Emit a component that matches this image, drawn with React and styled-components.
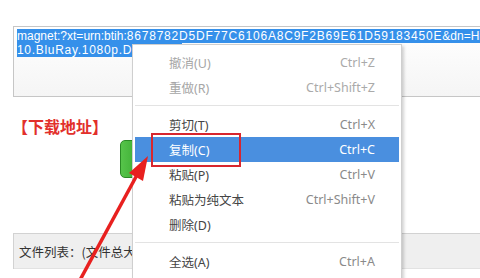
import React from "react";
import styled, { createGlobalStyle } from "styled-components";

const Global = createGlobalStyle`
  html, body { margin: 0; padding: 0; background: #fff; }
  body { width: 480px; height: 278px; overflow: hidden; }
`;

const Page = styled.div`
  position: relative;
  width: 480px;
  height: 278px;
  overflow: hidden;
  padding: 26px 0 0 13px;
  box-sizing: border-box;
  display: flex;
  flex-direction: column;
  align-items: flex-start;
  font-family: "Liberation Sans", Arial, sans-serif;
`;

const TextBox = styled.div`
  width: 500px;
  height: 71px;
  flex: none;
  box-sizing: border-box;
  border: 1.5px solid #c6c6c6;
  border-right: none;
  padding: 2px 3px;
  background: linear-gradient(180deg, #ffffff 0%, #f5f5f5 100%);
  font-size: 12px;
  line-height: 14px;
  white-space: nowrap;
  overflow: hidden;
`;

const Selected = styled.span`
  background: #3590ea;
  color: #fff;
  letter-spacing: ${(p) => p.$spacing || "0px"};
`;

const Hash = styled.span`
  letter-spacing: 0.8px;
`;

const Heading = styled.div`
  margin: 19px 0 0 -1px;
  font-family: "Noto Sans CJK SC", sans-serif;
  font-weight: 700;
  font-size: 16px;
  line-height: 20px;
  color: #e2302b;
`;

const ButtonRow = styled.div`
  display: flex;
  margin: 4px 0 0 107px;
`;

const GreenButton = styled.div`
  width: 60px;
  height: 38px;
  border-radius: 5px;
  box-sizing: border-box;
  border: 1px solid #2a8a25;
  background: linear-gradient(90deg, #56c44a 0%, #33a52c 40%, #2a9424 100%);
`;

const FilePanel = styled.div`
  margin-top: 55px;
  width: 500px;
  flex: none;
  box-sizing: border-box;
  border-top: 1px solid #d2d2d2;
  border-left: 1px solid #d2d2d2;
`;

const FileHeader = styled.div`
  height: 34px;
  display: flex;
  align-items: center;
  padding-left: 5px;
  background: #efefef;
  font-family: "Noto Sans CJK SC", sans-serif;
  font-size: 12.5px;
  color: #333;
  white-space: nowrap;
  border-bottom: 1px solid #e2e2e2;
`;

const Menu = styled.div`
  position: absolute;
  z-index: 5;
  left: 132px;
  top: 44px;
  width: 270px;
  height: 260px;
  box-sizing: border-box;
  padding: 4.5px 2px;
  background: #fff;
  border: 1px solid #cfcfcf;
  box-shadow: 2px 2px 3px rgba(0, 0, 0, 0.18);
  display: flex;
  flex-direction: column;
`;

const Item = styled.div`
  position: relative;
  height: 25px;
  flex: none;
  display: flex;
  align-items: center;
  justify-content: space-between;
  padding: 0 24px 0 34px;
  background: ${(p) => (p.$active ? "#4a8fdf" : "transparent")};
  color: ${(p) => (p.$active ? "#fff" : p.$disabled ? "#a6a6a6" : "#454545")};
`;

const Label = styled.span`
  font-family: "Noto Sans", "Noto Sans CJK SC", sans-serif;
  font-size: 12.5px;
`;

const Shortcut = styled.span`
  font-family: "Noto Sans", sans-serif;
  font-size: 12.5px;
  color: ${(p) => (p.$active ? "#fff" : p.$disabled ? "#aaa" : "#8a8a8a")};
`;

const Separator = styled.div`
  height: 12px;
  flex: none;
  display: flex;
  align-items: center;
  &::after {
    content: "";
    flex: 1;
    height: 1px;
    background: #e3e3e3;
  }
`;

const RedFrame = styled.div`
  position: absolute;
  left: 16px;
  top: -3.5px;
  width: 90px;
  height: 34px;
  box-sizing: border-box;
  border: 2.5px solid #d8262e;
`;

const ArrowSvg = styled.svg`
  position: absolute;
  z-index: 6;
  left: 0;
  top: 0;
  pointer-events: none;
`;

const items = [
  { label: "撤消(U)", key: "Ctrl+Z", disabled: true },
  { label: "重做(R)", key: "Ctrl+Shift+Z", disabled: true },
  "sep",
  { label: "剪切(T)", key: "Ctrl+X" },
  { label: "复制(C)", key: "Ctrl+C", active: true },
  { label: "粘贴(P)", key: "Ctrl+V" },
  { label: "粘贴为纯文本", key: "Ctrl+Shift+V" },
  { label: "删除(D)", key: "" },
  "sep",
  { label: "全选(A)", key: "Ctrl+A" },
];

export default function App() {
  return (
    <>
      <Global />
      <Page>
        <TextBox>
          <Selected>
            magnet:?xt=urn:btih:<Hash>8678782D5DF77C6106A8C9F2B69E61D59183450E</Hash>&amp;dn=Hitman.Agent.47.2015
          </Selected>
          <br />
          <Selected $spacing="0.7px">10.BluRay.1080p.DTS.x264</Selected>
        </TextBox>
        <Heading>【下载地址】</Heading>
        <ButtonRow>
          <GreenButton />
        </ButtonRow>
        <FilePanel>
          <FileHeader>文件列表：(文件总大小：10.5GB)</FileHeader>
        </FilePanel>

        <Menu>
          {items.map((it, i) =>
            it === "sep" ? (
              <Separator key={i} />
            ) : (
              <Item key={i} $active={it.active} $disabled={it.disabled}>
                <Label>{it.label}</Label>
                <Shortcut $active={it.active} $disabled={it.disabled}>
                  {it.key}
                </Shortcut>
                {it.active && <RedFrame />}
              </Item>
            )
          )}
        </Menu>

        <ArrowSvg width="480" height="278" viewBox="0 0 480 278">
          <line x1="80" y1="280" x2="137" y2="175" stroke="#e8201f" strokeWidth="3.5" />
          <polygon points="148,156 143,181 129,173" fill="#e8201f" />
        </ArrowSvg>
      </Page>
    </>
  );
}
